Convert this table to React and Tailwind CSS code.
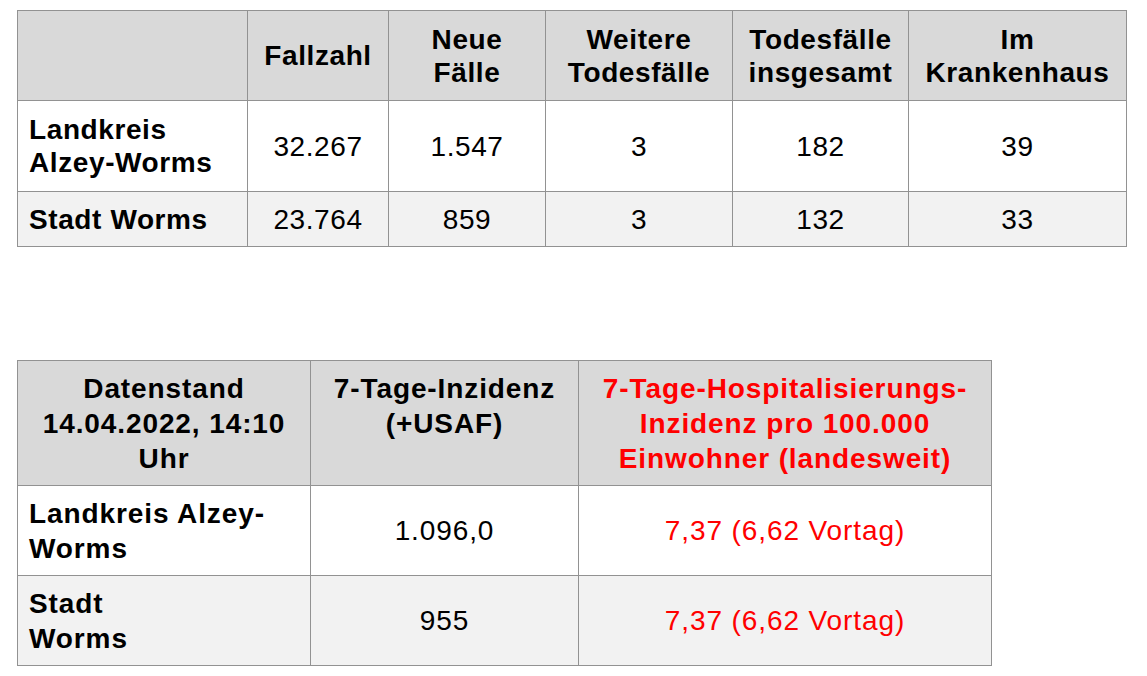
const font = { fontFamily: '"Liberation Sans", Arial, sans-serif' };

const cases = [
  { name: ["Landkreis", "Alzey-Worms"], total: "32.267", neu: "1.547", tote: "3", toteGes: "182", kh: "39" },
  { name: ["Stadt Worms"], total: "23.764", neu: "859", tote: "3", toteGes: "132", kh: "33" },
];

const inzidenz = [
  { name: ["Landkreis Alzey-", "Worms"], wert: "1.096,0", hosp: "7,37 (6,62 Vortag)" },
  { name: ["Stadt", "Worms"], wert: "955", hosp: "7,37 (6,62 Vortag)" },
];

function Lines({ lines }) {
  return lines.map((l, i) => (
    <span key={i}>
      {i > 0 && <br />}
      {l}
    </span>
  ));
}

export default function App() {
  return (
    <div className="min-h-[676px] bg-white pl-[17px] pt-[10px] text-black" style={font}>
      {/* Fallzahlen */}
      <table className="table-fixed border-collapse text-[28px] leading-[33px] tracking-[0.6px]">
        <colgroup>
          <col className="w-[230px]" />
          <col className="w-[141px]" />
          <col className="w-[157px]" />
          <col className="w-[187px]" />
          <col className="w-[176px]" />
          <col className="w-[218px]" />
        </colgroup>
        <thead>
          <tr className="h-[90px] bg-[#d9d9d9] font-bold">
            <th className="border border-[#929292]"></th>
            <th className="border border-[#929292] text-center align-middle">Fallzahl</th>
            <th className="border border-[#929292] text-center align-middle">
              Neue
              <br />
              Fälle
            </th>
            <th className="border border-[#929292] text-center align-middle">
              Weitere
              <br />
              Todesfälle
            </th>
            <th className="border border-[#929292] text-center align-middle">
              Todesfälle
              <br />
              insgesamt
            </th>
            <th className="border border-[#929292] text-center align-middle">
              Im
              <br />
              Krankenhaus
            </th>
          </tr>
        </thead>
        <tbody>
          {cases.map((r, i) => (
            <tr key={i} className={i === 0 ? "h-[91px] bg-white" : "h-[55px] bg-[#f2f2f2]"}>
              <td className="border border-[#929292] pl-[11px] text-left align-middle font-bold">
                <Lines lines={r.name} />
              </td>
              <td className="border border-[#929292] text-center align-middle">{r.total}</td>
              <td className="border border-[#929292] text-center align-middle">{r.neu}</td>
              <td className="border border-[#929292] text-center align-middle">{r.tote}</td>
              <td className="border border-[#929292] text-center align-middle">{r.toteGes}</td>
              <td className="border border-[#929292] text-center align-middle">{r.kh}</td>
            </tr>
          ))}
        </tbody>
      </table>

      {/* Inzidenzen */}
      <table className="mt-[113px] table-fixed border-collapse text-[28px] leading-[35px] tracking-[0.9px]">
        <colgroup>
          <col className="w-[293px]" />
          <col className="w-[268px]" />
          <col className="w-[413px]" />
        </colgroup>
        <thead>
          <tr className="h-[125px] bg-[#d9d9d9] font-bold">
            <th className="border border-[#929292] text-center align-middle">
              Datenstand
              <br />
              14.04.2022, 14:10
              <br />
              Uhr
            </th>
            <th className="border border-[#929292] pb-[35px] text-center align-middle">
              7-Tage-Inzidenz
              <br />
              (+USAF)
            </th>
            <th className="border border-[#929292] text-center align-middle text-[#ff0000]">
              7-Tage-Hospitalisierungs-
              <br />
              Inzidenz pro 100.000
              <br />
              Einwohner (landesweit)
            </th>
          </tr>
        </thead>
        <tbody>
          {inzidenz.map((r, i) => (
            <tr key={i} className={i === 0 ? "h-[90px] bg-white" : "h-[90px] bg-[#f2f2f2]"}>
              <td className="border border-[#929292] pl-[11px] text-left align-middle font-bold">
                <Lines lines={r.name} />
              </td>
              <td className="border border-[#929292] text-center align-middle">{r.wert}</td>
              <td className="border border-[#929292] text-center align-middle text-[#ff0000]">{r.hosp}</td>
            </tr>
          ))}
        </tbody>
      </table>
    </div>
  );
}
